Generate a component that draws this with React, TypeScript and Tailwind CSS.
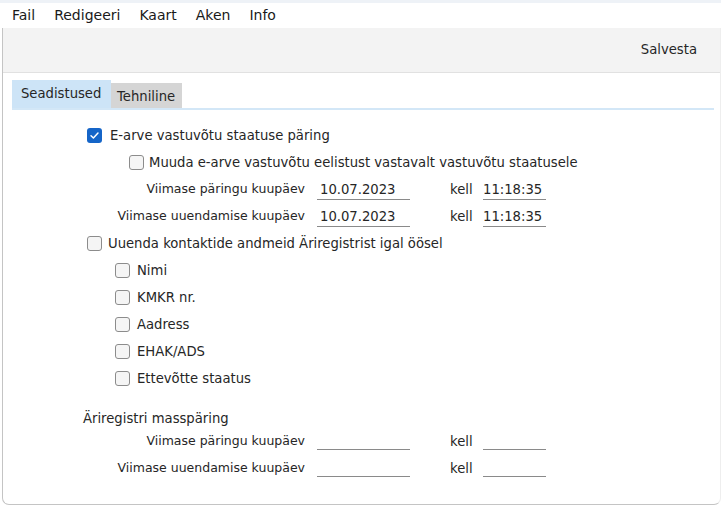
import React from "react"

const font = { fontFamily: '"DejaVu Sans", Verdana, sans-serif' }

function Box({ checked = false }: { checked?: boolean }) {
  if (checked) {
    return (
      <span className="flex h-[15px] w-[15px] shrink-0 items-center justify-center rounded-[3px] bg-[#1565c8]">
        <svg width="11" height="11" viewBox="0 0 12 12" fill="none">
          <path d="M2.2 6.3 4.8 8.8 9.8 3.4" stroke="#fff" strokeWidth="1.6" strokeLinecap="round" strokeLinejoin="round" />
        </svg>
      </span>
    )
  }
  return <span className="h-[15px] w-[15px] shrink-0 rounded-[3px] border border-[#8c8c8c] bg-[#f5f5f5]" />
}

function DateRow({ label, date, time }: { label: string; date?: string; time?: string }) {
  return (
    <div className="flex h-[27px] items-center">
      <div className="w-[302px] text-right text-[12.5px]">{label}</div>
      <div className={`ml-[12px] w-[93px] border-b border-[#8a8a8a] pl-[3px] ${date ? "h-[20px] leading-[20px]" : "h-[16px]"}`}>{date}</div>
      <div className="ml-[40px] w-[33px]">kell</div>
      <div className={`w-[63px] border-b border-[#8a8a8a] ${time ? "h-[20px] leading-[20px]" : "h-[16px]"}`}>{time}</div>
    </div>
  )
}

function CheckRow({ label, checked, boxMl, gap }: { label: string; checked?: boolean; boxMl: string; gap: string }) {
  return (
    <div className={`flex h-[27px] items-center ${boxMl}`}>
      <Box checked={checked} />
      <span className={gap}>{label}</span>
    </div>
  )
}

export default function App() {
  const sub = ["Nimi", "KMKR nr.", "Aadress", "EHAK/ADS", "Ettevõtte staatus"]
  return (
    <div className="relative h-[509px] w-[721px] overflow-hidden bg-white text-[13.2px] text-[#262626]" style={font}>
      <div className="h-[3px] bg-[#eef2f7]" />
      <div className="flex h-[25px] items-center gap-[19px] pl-[12px] text-[14px] text-[#1a1a1a]">
        <span>Fail</span>
        <span>Redigeeri</span>
        <span>Kaart</span>
        <span>Aken</span>
        <span>Info</span>
      </div>
      <div className="ml-[2px] h-[477px] rounded-bl-[7px] rounded-br-[7px] border-b border-l border-r border-[#c4c4c4] border-r-[#eeeeee]">
        <div className="flex h-[45px] items-center justify-end border-b border-[#e1e1e1] bg-[#f3f3f3] pr-[23px]">
          Salvesta
        </div>
        <div className="mt-[7px] flex items-end pl-[9px]">
          <div className="flex h-[28px] w-[99px] items-center bg-[#cde4f7] pl-[9px]">Seadistused</div>
          <div className="flex h-[25px] w-[71px] items-center bg-[#d5d5d5] pl-[6px] pt-[2px]">Tehniline</div>
        </div>
        <div className="ml-[9px] mr-[6px] h-[2px] bg-[#d3e7f7]" />
        <div className="mt-[12px]">
          <CheckRow label="E-arve vastuvõtu staatuse päring" checked boxMl="ml-[84px]" gap="ml-[8px]" />
          <CheckRow label="Muuda e-arve vastuvõtu eelistust vastavalt vastuvõtu staatusele" boxMl="ml-[126px]" gap="ml-[5px]" />
          <DateRow label="Viimase päringu kuupäev" date="10.07.2023" time="11:18:35" />
          <DateRow label="Viimase uuendamise kuupäev" date="10.07.2023" time="11:18:35" />
          <CheckRow label="Uuenda kontaktide andmeid Äriregistrist igal öösel" boxMl="ml-[84px]" gap="ml-[6px]" />
          {sub.map((s) => (
            <CheckRow key={s} label={s} boxMl="ml-[112px]" gap="ml-[7px]" />
          ))}
          <div className="mt-[13px] flex h-[27px] items-center pl-[80px]">Äriregistri masspäring</div>
          <div className="-mt-[4px]">
            <DateRow label="Viimase päringu kuupäev" />
            <DateRow label="Viimase uuendamise kuupäev" />
          </div>
        </div>
      </div>
    </div>
  )
}
